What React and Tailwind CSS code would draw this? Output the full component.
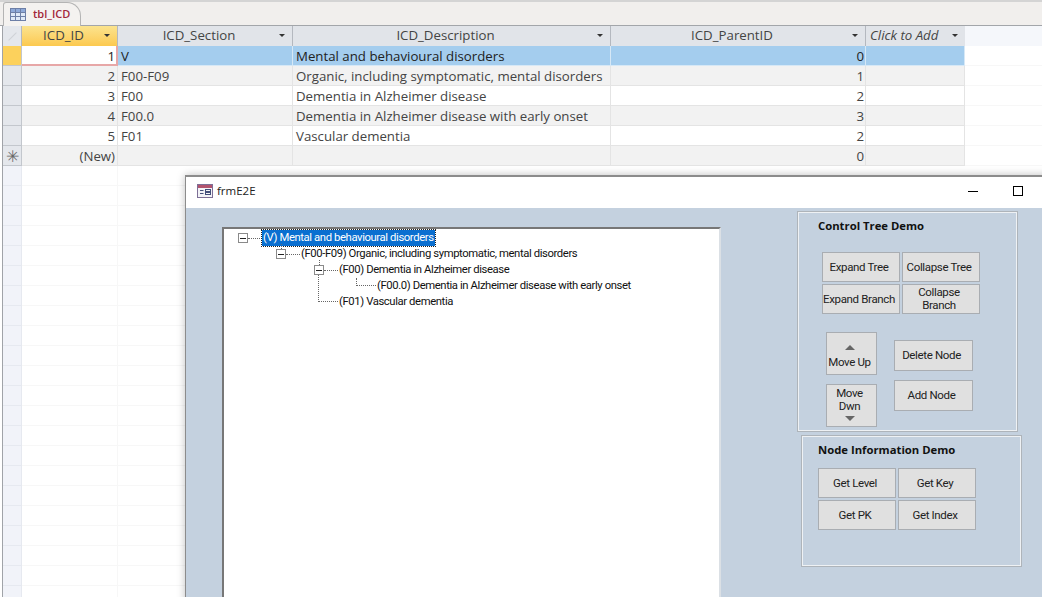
import React from 'react'

const columns = [
  { name: 'ICD_ID', width: 'w-[96px]', active: true },
  { name: 'ICD_Section', width: 'w-[175px]' },
  { name: 'ICD_Description', width: 'w-[318px]' },
  { name: 'ICD_ParentID', width: 'w-[255px]' },
]

const rows = [
  { id: '1', section: 'V', description: 'Mental and behavioural disorders', parent: '0' },
  { id: '2', section: 'F00-F09', description: 'Organic, including symptomatic, mental disorders', parent: '1' },
  { id: '3', section: 'F00', description: 'Dementia in Alzheimer disease', parent: '2' },
  { id: '4', section: 'F00.0', description: 'Dementia in Alzheimer disease with early onset', parent: '3' },
  { id: '5', section: 'F01', description: 'Vascular dementia', parent: '2' },
  { id: '(New)', section: '', description: '', parent: '0', isNew: true },
]

function HeaderCell({ name, width, active }) {
  return (
    <div className={`${width} h-5 shrink-0 relative flex items-center justify-center pr-3 border-r border-[#b4b8bf] ${active ? 'bg-gradient-to-b from-[#fbe38d] to-[#fcc94e]' : 'bg-[#e1e4e9]'}`}>
      <span className="text-[#444] text-[13.25px]">{name}</span>
      <span className="absolute right-[7px] top-2 w-0 h-0 border-x-[3px] border-x-transparent border-t-[3px] border-t-[#333]" />
    </div>
  )
}

function DataRow({ row, index }) {
  const selected = index === 0
  const bg = selected ? 'bg-[#a4cdee]' : index % 2 === 1 ? 'bg-[#f2f2f2]' : 'bg-white'
  const text = selected ? 'text-[#222]' : 'text-[#444]'
  const line = selected ? 'border-[#d6e8f6]' : 'border-[#e4e4e4]'
  return (
    <div className={`flex h-5 text-[13.25px] leading-5 ${text}`}>
      <div className={`w-[19px] shrink-0 flex items-center justify-center border-r border-b border-[#c3c7cd] ${selected ? 'bg-[#fcd15c]' : 'bg-[#e4e7ec]'} text-[#666] text-[16px]`}>
        {row.isNew ? '✳' : ''}
      </div>
      {selected ? (
        <div className="w-[96px] shrink-0 bg-white text-right pr-px border-r-2 border-b-2 border-[#e7a7a7]">{row.id}</div>
      ) : (
        <div className={`w-[96px] shrink-0 text-right pr-[2px] border-r border-b ${bg} ${line}`}>{row.id}</div>
      )}
      <div className={`w-[175px] shrink-0 pl-[3px] border-r border-b ${bg} ${line}`}>{row.section}</div>
      <div className={`w-[318px] shrink-0 pl-[3px] border-r border-b ${bg} ${line}`}>{row.description}</div>
      <div className={`w-[255px] shrink-0 text-right pr-[1px] border-r border-b ${bg} ${line}`}>{row.parent}</div>
      <div className={`w-[99px] shrink-0 border-r border-b ${bg} ${line}`} />
      <div className="flex-1 border-b border-[#f7f7f7]" />
    </div>
  )
}

function FormButton({ className, children }) {
  return (
    <button className={`flex flex-col items-center justify-center whitespace-nowrap pr-[4px] bg-[#e0e0e0] border border-[#a9adb2] text-[#222] text-[11.5px] leading-[13px] tracking-[-0.35px] font-['Roboto',sans-serif] ${className}`}>
      {children}
    </button>
  )
}

function MinusBox({ stub }) {
  return (
    <span className="relative w-[10px] h-[10px] border border-[#8a8a8a] bg-white shrink-0 flex items-center justify-center">
      <span className="w-[6px] h-px bg-[#222]" />
      {stub && <span className="absolute left-1 bottom-[9px] h-[5px] border-l border-dotted border-[#666]" />}
    </span>
  )
}

function TreeRow({ indent, box, stub, selected, elbow, children }) {
  return (
    <div className={`flex items-center h-4 ${indent}`}>
      {box ? (
        <>
          <MinusBox stub={stub} />
          <span className="w-[14px] border-t border-dotted border-[#666] shrink-0" />
        </>
      ) : (
        <span className="relative w-[20px] h-0 shrink-0">
          <span className={`absolute left-0 bottom-0 w-full border-l border-b border-dotted border-[#666] ${elbow}`} />
        </span>
      )}
      <span className={selected ? 'bg-[#0a6fd0] text-white outline-1 outline-dotted outline-[#222] px-px' : 'text-[#111] px-px'}>
        {children}
      </span>
    </div>
  )
}

function Panel({ className, children }) {
  return (
    <div className={`w-[221px] border-2 border-[#eef1f4] outline outline-1 outline-[#aeb4ba] -outline-offset-1 ${className}`}>
      {children}
    </div>
  )
}

export default function App() {
  return (
    <div className="relative w-[1042px] h-[597px] overflow-hidden bg-white font-['Open_Sans','Noto_Sans',sans-serif]">
      {/* Tab strip */}
      <div className="h-[26px] bg-[#f1efed] border-t-2 border-[#d4d4d4] border-b border-b-[#a3a6aa] flex pl-[3px]">
        <div className="w-[78px] h-[24px] bg-[#f4f2f0] border-l border-t border-r border-[#b4b4b4] rounded-tr-[14px] rounded-tl-[3px] flex items-center pl-[6px] gap-[7px]">
          <svg width="16" height="13" viewBox="0 0 16 13">
            <rect x="0.5" y="0.5" width="15" height="12" fill="#dfe9f7" stroke="#6d7fa6" />
            <rect x="1" y="1" width="14" height="3" fill="#8ea9d8" />
            <path d="M0.5 4.5H15.5M0.5 8.5H15.5M5.5 0.5V12.5M10.5 0.5V12.5" stroke="#6d7fa6" />
          </svg>
          <span className="text-[#a3263a] text-[11px] font-semibold">tbl_ICD</span>
        </div>
      </div>

      {/* Datasheet */}
      <div className="ml-[2px] border-l border-[#a0a3a8]">
        <div className="flex h-5">
          <div className="w-[19px] shrink-0 bg-[#e4e7ec] border-r border-[#b4b8bf] flex items-center justify-center">
            <span className="w-[11px] h-px bg-[#cfd2d7] -rotate-45" />
          </div>
          {columns.map(c => <HeaderCell key={c.name} {...c} />)}
          <div className="w-[99px] h-5 shrink-0 relative flex items-center bg-[#e1e4e9] pl-1">
            <span className="italic text-[#444] text-[13.25px]">Click to Add</span>
            <span className="absolute right-[7px] top-2 w-0 h-0 border-x-[3px] border-x-transparent border-t-[3px] border-t-[#333]" />
          </div>
          <div className="flex-1 bg-[#f5f7fb]" />
        </div>
        {rows.map((row, i) => <DataRow key={row.id} row={row} index={i} />)}
        {Array.from({ length: 22 }).map((_, i) => (
          <div key={i} className="flex h-5">
            <div className="w-[19px] shrink-0 bg-[#f1f3f9] border-b border-r border-[#e6e9f0]" />
            <div className="w-[96px] shrink-0 border-b border-r border-[#f7f7f7]" />
            <div className="flex-1 border-b border-[#f7f7f7]" />
          </div>
        ))}
      </div>

      {/* Form window */}
      <div className="absolute left-[185px] top-[175px] w-[870px] h-[430px] bg-white border-t-2 border-l border-[#8c8c8c] shadow-[0_0_8px_rgba(0,0,0,0.25)] flex flex-col">
        <div className="h-[31px] shrink-0 flex items-center pl-[11px] pb-[3px] relative">
          <svg width="16" height="14" viewBox="0 0 16 14">
            <rect x="0.5" y="0.5" width="15" height="13" fill="#f3f3f7" stroke="#7d6f96" />
            <rect x="1" y="1" width="14" height="3" fill="#b2536e" />
            <path d="M3 6.5H6.5M3 9.5H6.5" stroke="#44507a" />
            <rect x="8.5" y="5.5" width="5" height="2" fill="none" stroke="#44507a" />
            <rect x="8.5" y="8.5" width="5" height="2" fill="none" stroke="#44507a" />
          </svg>
          <span className="ml-[4px] text-[11.5px] text-[#222]">frmE2E</span>
          <span className="absolute left-[782px] top-[14px] w-[10px] h-px bg-black" />
          <span className="absolute left-[827px] top-[9px] w-[10px] h-[10px] border border-black" />
        </div>

        <div className="flex-1 bg-[#c4d1df] flex pl-[36px] pt-[19px]">
          {/* Tree */}
          <div className="w-[499px] h-[400px] shrink-0 bg-white border-t-2 border-l-2 border-[#777] border-r-2 border-r-[#dbe0e5] pt-px text-[11.3px] tracking-[-0.4px] font-['Roboto',sans-serif]">
            <TreeRow indent="pl-[14px]" box selected>(V) Mental and behavioural disorders</TreeRow>
            <TreeRow indent="pl-[52px]" box stub>(F00-F09) Organic, including symptomatic, mental disorders</TreeRow>
            <TreeRow indent="pl-[90px]" box stub>(F00) Dementia in Alzheimer disease</TreeRow>
            <TreeRow indent="pl-[132px]" elbow="h-[8px]">(F00.0) Dementia in Alzheimer disease with early onset</TreeRow>
            <TreeRow indent="pl-[94px]" elbow="h-[27px]">(F01) Vascular dementia</TreeRow>
          </div>

          {/* Side panels */}
          <div className="ml-[76px] w-[226px] shrink-0 flex flex-col">
            <Panel className="h-[221px] pl-[19px] pt-[5px] mt-[-16px]">
              <div className="text-[11.3px] font-bold text-[#111] leading-4">Control Tree Demo</div>
              <div className="grid grid-cols-[78px_78px] gap-[2px] mt-[18px] ml-[4px] auto-rows-[30px]">
                <FormButton>Expand Tree</FormButton>
                <FormButton>Collapse Tree</FormButton>
                <FormButton>Expand Branch</FormButton>
                <FormButton><span>Collapse</span><span>Branch</span></FormButton>
              </div>
              <div className="flex mt-[18px] ml-[8px] gap-[17px]">
                <div className="flex flex-col gap-[9px]">
                  <FormButton className="w-[51px] h-[43px] pt-[6px]">
                    <span className="w-0 h-0 border-x-[5px] border-x-transparent border-b-[5px] border-b-[#666]" />
                    <span className="mt-[6px]">Move Up</span>
                  </FormButton>
                  <FormButton className="w-[51px] h-[43px] pb-[3px]">
                    <span>Move</span>
                    <span>Dwn</span>
                    <span className="w-0 h-0 mt-[3px] border-x-[5px] border-x-transparent border-t-[5px] border-t-[#666]" />
                  </FormButton>
                </div>
                <div className="flex flex-col gap-[9px] mt-[8px]">
                  <FormButton className="w-[79px] h-[31px]">Delete Node</FormButton>
                  <FormButton className="w-[79px] h-[31px]">Add Node</FormButton>
                </div>
              </div>
            </Panel>
            <Panel className="h-[132px] ml-[4px] mt-[3px] pl-[15px] pt-[5px]">
              <div className="text-[11.3px] font-bold text-[#111] leading-4">Node Information Demo</div>
              <div className="grid grid-cols-[78px_78px] gap-[2px] mt-[10px] auto-rows-[30px]">
                <FormButton>Get Level</FormButton>
                <FormButton>Get Key</FormButton>
                <FormButton>Get PK</FormButton>
                <FormButton>Get Index</FormButton>
              </div>
            </Panel>
          </div>
        </div>
      </div>
    </div>
  )
}
